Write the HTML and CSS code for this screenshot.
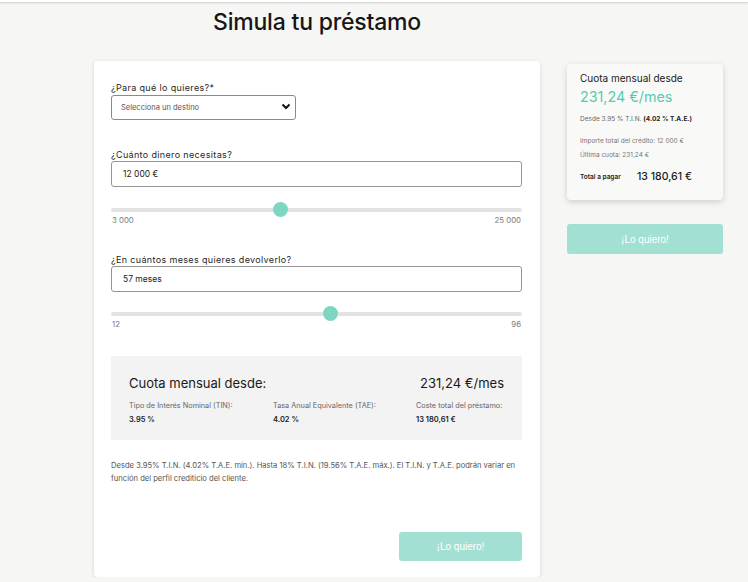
FILE: index.html
```html
<!DOCTYPE html>
<html lang="es">
<head>
    <meta charset="UTF-8">
    <title>Simula tu préstamo</title>
    <link rel="stylesheet" href="styles.css">
</head>
<body>
    <div class="top-bar"></div>

    <div class="page">
        <div class="main-col">
            <h1 class="title">Simula tu préstamo</h1>

            <form class="sim-card">
                <!-- Destino -->
                <label class="field-label">¿Para qué lo quieres?*</label>
                <div class="select-wrap">
                    <select class="select">
                        <option>Selecciona un destino</option>
                        <option>Coche</option>
                        <option>Reforma</option>
                        <option>Estudios</option>
                    </select>
                    <svg class="chevron" width="10" height="7" viewBox="0 0 10 7">
                        <path d="M1.5 1.5 L5 5 L8.5 1.5" fill="none" stroke="#111" stroke-width="2"/>
                    </svg>
                </div>

                <!-- Importe -->
                <label class="field-label field-gap">¿Cuánto dinero necesitas?</label>
                <input type="text" class="text-input" value="12 000 €">
                <input type="range" class="range" min="3000" max="25000" step="100" value="12000">
                <div class="range-limits">
                    <span>3 000</span>
                    <span>25 000</span>
                </div>

                <!-- Plazo -->
                <label class="field-label field-gap">¿En cuántos meses quieres devolverlo?</label>
                <input type="text" class="text-input" value="57 meses">
                <input type="range" class="range range-months" min="12" max="96" step="1" value="57">
                <div class="range-limits">
                    <span>12</span>
                    <span>96</span>
                </div>

                <!-- Resumen -->
                <div class="summary">
                    <div class="summary-head">
                        <span>Cuota mensual desde:</span>
                        <span>231,24 €/mes</span>
                    </div>
                    <div class="summary-cols">
                        <div>
                            <div class="summary-label">Tipo de Interés Nominal (TIN):</div>
                            <div class="summary-value">3.95 %</div>
                        </div>
                        <div>
                            <div class="summary-label">Tasa Anual Equivalente (TAE):</div>
                            <div class="summary-value">4.02 %</div>
                        </div>
                        <div>
                            <div class="summary-label">Coste total del préstamo:</div>
                            <div class="summary-value">13 180,61 €</div>
                        </div>
                    </div>
                </div>

                <p class="disclaimer">Desde 3.95% T.I.N. (4.02% T.A.E. mín.). Hasta 18% T.I.N. (19.56% T.A.E. máx.). El T.I.N. y T.A.E. podrán variar en función del perfil crediticio del cliente.</p>

                <div class="actions">
                    <button type="submit" class="btn">¡Lo quiero!</button>
                </div>
            </form>
        </div>

        <aside class="side-col">
            <div class="side-card">
                <div class="side-title">Cuota mensual desde</div>
                <div class="side-amount">231,24 €/mes</div>
                <div class="side-rate">Desde 3.95 % T.I.N. <b>(4.02 % T.A.E.)</b></div>
                <div class="side-line side-line-first">Importe total del crédito: 12 000 €</div>
                <div class="side-line">Última cuota: 231,24 €</div>
                <div class="side-total">
                    <span class="side-total-label">Total a pagar</span>
                    <span class="side-total-value">13 180,61 €</span>
                </div>
            </div>
            <button type="button" class="btn btn-block">¡Lo quiero!</button>
        </aside>
    </div>
</body>
</html>
```

FILE: styles.css
```css
body {
    margin: 0;
    background: #f6f6f4;
    font-family: Inter, "Open Sans", sans-serif;
    color: #1d1d1d;
}
.top-bar {
    height: 2px;
    background: #fff;
    box-shadow: 0 1px 2px rgba(0, 0, 0, 0.18);
}
.page {
    display: flex;
    align-items: flex-start;
    padding-left: 94px;
    gap: 27px;
}
.main-col {
    width: 446px;
}
.title {
    margin: 6px 0 25px;
    font-size: 23px;
    line-height: 28px;
    font-weight: 500;
    text-align: center;
    letter-spacing: -0.2px;
    color: #161616;
}
.sim-card {
    background: #fff;
    border-radius: 4px;
    box-shadow: 0 1px 4px rgba(0, 0, 0, 0.13);
    padding: 21px 18px 16px 17px;
}
.field-label {
    display: block;
    font-size: 9px;
    line-height: 11px;
    letter-spacing: 0.35px;
    margin-bottom: 1px;
    color: #1f1f1f;
}
.field-gap {
    margin-top: 29px;
}
.select-wrap {
    position: relative;
    width: 185px;
}
.select {
    -webkit-appearance: none;
    appearance: none;
    width: 100%;
    height: 25px;
    padding: 0 20px 0 9px;
    border: 1px solid #8a8a8a;
    border-radius: 3px;
    background: #fff;
    font-family: inherit;
    font-size: 7.5px;
    color: #555;
    box-sizing: border-box;
}
.chevron {
    position: absolute;
    right: 5px;
    top: 9px;
    pointer-events: none;
}
.text-input {
    display: block;
    width: 100%;
    height: 26px;
    padding: 0 11px;
    border: 1px solid #959595;
    border-radius: 3px;
    font-family: inherit;
    font-size: 8.5px;
    color: #1b1b1b;
    box-sizing: border-box;
}
.range {
    -webkit-appearance: none;
    appearance: none;
    display: block;
    width: 100%;
    height: 15px;
    margin: 15px 0 0;
    background: transparent;
}
.range-months {
    margin-top: 14px;
}
.range::-webkit-slider-runnable-track {
    height: 4px;
    background: #e3e3e3;
    border-radius: 2px;
}
.range::-webkit-slider-thumb {
    -webkit-appearance: none;
    width: 15px;
    height: 15px;
    margin-top: -5.5px;
    border-radius: 50%;
    background: #7dd6c2;
    border: none;
}
.range-limits {
    display: flex;
    justify-content: space-between;
    margin-top: -2px;
    padding: 0 1px;
    font-size: 7.8px;
    line-height: 10px;
    color: #7a7a7a;
}
.summary {
    margin-top: 27px;
    background: #f3f3f3;
    padding: 19px 18px 15px;
}
.summary-head {
    display: flex;
    justify-content: space-between;
    font-size: 13px;
    line-height: 16px;
    color: #1a1a1a;
}
.summary-cols {
    display: grid;
    grid-template-columns: 144px 143px 1fr;
    margin-top: 10px;
}
.summary-label {
    font-size: 7.3px;
    line-height: 10px;
    color: #666;
}
.summary-value {
    margin-top: 4px;
    font-size: 7.5px;
    line-height: 10px;
    font-weight: 600;
    color: #222;
}
.disclaimer {
    margin: 19px 0 0;
    font-size: 7.6px;
    line-height: 13px;
    color: #555;
}
.actions {
    display: flex;
    justify-content: flex-end;
    margin-top: 47px;
}
.btn {
    width: 123px;
    height: 29px;
    border: none;
    border-radius: 3px;
    background: #a2e0d3;
    color: #fff;
    font-family: "Liberation Sans", Arial, sans-serif;
    font-size: 10px;
    cursor: pointer;
}
.btn:hover {
    background: #8fd6c6;
}
.side-col {
    width: 156px;
    margin-top: 62px;
}
.side-card {
    background: #f9f9f8;
    border-radius: 4px;
    box-shadow: 0 2px 6px rgba(0, 0, 0, 0.16);
    padding: 8px 13px 16px;
}
.side-title {
    font-size: 10px;
    line-height: 13px;
    color: #1a1a1a;
}
.side-amount {
    margin-top: 3px;
    font-size: 14.3px;
    line-height: 18px;
    color: #58cbac;
}
.side-rate {
    margin-top: 8px;
    font-size: 6.5px;
    line-height: 10px;
    color: #666;
}
.side-rate b {
    color: #222;
}
.side-line {
    margin-top: 4px;
    font-size: 6.5px;
    line-height: 10px;
    color: #777;
}
.side-line-first {
    margin-top: 12px;
}
.side-total {
    display: flex;
    align-items: center;
    margin-top: 10px;
    line-height: 14px;
}
.side-total-label {
    width: 57px;
    font-size: 6.5px;
    font-weight: 600;
    color: #222;
}
.side-total-value {
    font-size: 10.5px;
    font-weight: 500;
    color: #1a1a1a;
}
.btn-block {
    display: block;
    width: 100%;
    height: 30px;
    margin-top: 24px;
}
```
